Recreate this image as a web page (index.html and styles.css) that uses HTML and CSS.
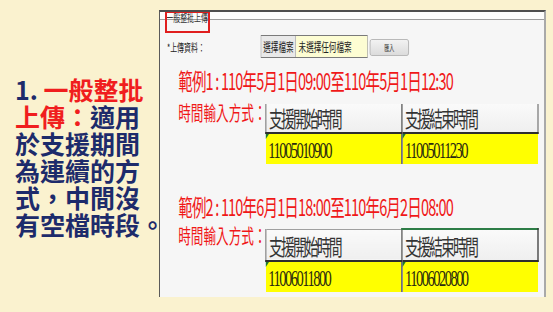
FILE: index.html
```html
<!DOCTYPE html>
<html lang="zh-Hant">
<head>
    <meta charset="UTF-8">
    <meta name="viewport" content="width=device-width, initial-scale=1.0">
    <title>一般整批上傳</title>
    <link rel="stylesheet" href="styles.css">
</head>
<body>
    <div class="slide">
        <div class="lead">
            <div class="lead-line">1. <span class="hl">一般整批</span></div>
            <div class="lead-line"><span class="hl">上傳：</span>適用</div>
            <div class="lead-line">於支援期間</div>
            <div class="lead-line">為連續的方</div>
            <div class="lead-line">式，中間沒</div>
            <div class="lead-line">有空檔時段。</div>
        </div>

        <div class="shot">
            <div class="shot-top"></div>
            <div class="shot-body">
                <span class="legend">一般整批上傳</span>
                <div class="upload-row">
                    <span class="field-label">*上傳資料：</span>
                    <span class="file-input">
                        <span class="file-btn">選擇檔案</span>
                        <span class="file-name">未選擇任何檔案</span>
                    </span>
                    <span class="import-btn">匯入</span>
                </div>

                <h2 class="example">範例1 : 110年5月1日09:00至110年5月1日12:30</h2>
                <div class="input-row">
                    <span class="input-label">時間輸入方式：</span>
                    <table class="sheet">
                        <tr class="head">
                            <th>支援開始時間</th>
                            <th>支援結束時間</th>
                        </tr>
                        <tr class="data">
                            <td>11005010900</td>
                            <td>11005011230</td>
                        </tr>
                    </table>
                </div>

                <h2 class="example example-2">範例2 : 110年6月1日18:00至110年6月2日08:00</h2>
                <div class="input-row input-row-2">
                    <span class="input-label">時間輸入方式：</span>
                    <table class="sheet sheet-2">
                        <tr class="head">
                            <th>支援開始時間</th>
                            <th>支援結束時間</th>
                        </tr>
                        <tr class="data">
                            <td>11006011800</td>
                            <td>11006020800</td>
                        </tr>
                    </table>
                </div>
            </div>
            <div class="mark"></div>
        </div>
    </div>
</body>
</html>
```

FILE: styles.css
```css
body {
    margin: 0;
    background-color: #faf2cf;
    font-family: "Noto Sans CJK TC", sans-serif;
}
.slide {
    display: flex;
    height: 312px;
    overflow: hidden;
}
.lead {
    width: 159px;
    box-sizing: border-box;
    padding: 76px 0 0 15px;
    font-size: 25px;
    font-weight: bold;
    line-height: 27px;
    color: #1d2b6b;
    white-space: nowrap;
}
.lead-line {
    height: 27px;
}
.hl {
    color: #f01e1e;
}

/* screenshot of the upload form */
.shot {
    position: relative;
    width: 387px;
    height: 287px;
    margin-top: 10px;
    box-sizing: border-box;
    border-top: 2px solid #4d4d4d;
    border-left: 1px solid #5a5a5a;
    border-right: 2px solid #a9a9a9;
    background-color: #f6f6f6;
    overflow: hidden;
}
.shot-top {
    height: 7px;
    background-color: #fcfcfc;
    border-bottom: 1px solid #9c9c9c;
}
.shot-body {
    position: relative;
    width: 610px;
    padding-top: 15px;
    transform: scaleX(.63);
    transform-origin: 0 0;
}
.legend {
    position: absolute;
    left: 10px;
    top: -9px;
    font-size: 11px;
    line-height: 13px;
    color: #333;
}
.mark {
    position: absolute;
    left: 5px;
    top: -1px;
    width: 45px;
    height: 22px;
    box-sizing: border-box;
    border: 2px solid #e01e1e;
}
.upload-row {
    display: flex;
    align-items: center;
    height: 23px;
}
.field-label {
    width: 160px;
    box-sizing: border-box;
    padding-left: 11px;
    font-size: 11px;
    color: #222;
}
.file-input {
    display: flex;
    width: 170px;
    height: 23px;
    box-sizing: border-box;
    border: 1px solid #7a7a7a;
    font-size: 12px;
    color: #222;
}
.file-btn {
    display: flex;
    align-items: center;
    justify-content: center;
    width: 54px;
    background-color: #e9e9e9;
    border-right: 1px solid #999;
}
.file-name {
    display: flex;
    align-items: center;
    flex: 1;
    padding-left: 4px;
    background-color: #fdfdd3;
}
.import-btn {
    display: flex;
    align-items: center;
    justify-content: center;
    width: 62px;
    height: 17px;
    margin: 1px 0 0 3px;
    box-sizing: border-box;
    border: 1px solid #aaa;
    border-radius: 3px;
    background: linear-gradient(#f2f2f2, #dcdcdc);
    font-size: 8px;
    color: #333;
}
.example {
    margin: 9px 0 0 29px;
    font-size: 23px;
    font-weight: normal;
    line-height: 27px;
    letter-spacing: -1.3px;
    color: #f01818;
    white-space: nowrap;
}
.example-2 {
    margin-top: 29px;
}
.input-row {
    display: flex;
    align-items: flex-start;
    margin-top: 8px;
}
.input-row-2 {
    margin-top: 5px;
}
.input-label {
    width: 167px;
    box-sizing: border-box;
    padding-left: 29px;
    font-size: 20px;
    line-height: 22px;
    color: #f01818;
    white-space: nowrap;
}

/* spreadsheet cells */
.sheet {
    margin-top: 2px;
    border-collapse: collapse;
}
.sheet-2 {
    margin-top: 3px;
}
.sheet th,
.sheet td {
    width: 216px;
    padding: 0 0 0 4px;
    box-sizing: border-box;
    text-align: left;
}
.sheet th {
    height: 29px;
    padding-bottom: 3px;
    vertical-align: bottom;
    border-left: 2px solid #8a8a8a;
    border-bottom: 2px solid #2e2e2e;
    background: linear-gradient(#fafafa, #efefef);
    font-size: 22px;
    font-weight: normal;
    line-height: 24px;
    letter-spacing: -3px;
    color: #333;
}
.sheet th + th {
    border-left-color: #555;
    border-right: 2px solid #7a7a7a;
}
.sheet-2 th {
    height: 32px;
    border-top: 1px solid #a0a0a0;
}
.sheet-2 th + th {
    border-top: 2px solid #2d7d46;
    border-right-color: #333;
}
.sheet td {
    position: relative;
    height: 31px;
    padding-top: 3px;
    background-color: #ffff00;
    box-shadow: 0 3px 3px rgba(0,0,0,0.25);
    font-family: "Liberation Serif", serif;
    font-size: 23px;
    letter-spacing: -2.4px;
    color: #2a2a10;
}
.sheet td + td {
    border-left: 2px solid #3c3c3c;
}
.sheet td::before {
    content: "";
    position: absolute;
    left: 0;
    top: 0;
    border-top: 5px solid #1e7a2e;
    border-right: 5px solid transparent;
}
```
